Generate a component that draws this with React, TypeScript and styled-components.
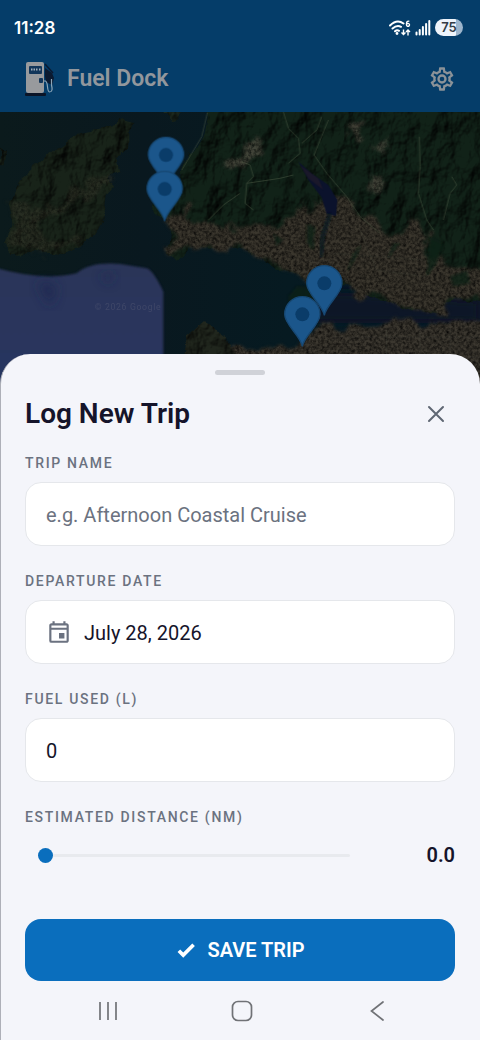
import React, { useState } from "react";
import styled, { createGlobalStyle } from "styled-components";
import { MdOutlineEvent } from "react-icons/md";

const GlobalStyle = createGlobalStyle`
  *, *::before, *::after { box-sizing: border-box; }
  body { margin: 0; background: #f4f5fa; }
  button, input { font-family: inherit; }
`;

const Screen = styled.div`
  min-height: 100vh;
  display: flex;
  flex-direction: column;
  background: #f4f5fa;
  color: #15142a;
  font-family: Roboto, "Liberation Sans", sans-serif;
`;

const Top = styled.header`
  background: #053d69;
  height: 112px;
`;

const StatusBar = styled.div`
  height: 55px;
  padding: 0 17px 0 14px;
  display: flex;
  align-items: center;
  justify-content: space-between;
  color: #fff;
`;

const Clock = styled.time`
  font: 600 17px/20px Inter, sans-serif;
`;

const StatusIcons = styled.div`
  display: flex;
  align-items: center;
  gap: 4px;
`;

const Battery = styled.span`
  width: 28px;
  height: 17px;
  border-radius: 9px;
  background: linear-gradient(90deg, #eef4fb 75%, #9db5cc 75%);
  color: #333b45;
  font: 600 13px/17px Inter, sans-serif;
  text-align: center;
`;

const AppBar = styled.div`
  height: 48px;
  padding: 0 24px 0 25px;
  display: flex;
  align-items: center;
  gap: 12px;
`;

const Brand = styled.h1`
  flex: 1;
  margin: 0;
  color: #92979d;
  font-size: 23px;
  line-height: 28px;
  font-weight: 600;
`;

const IconButton = styled.button<{ $color: string }>`
  display: grid;
  place-items: center;
  padding: 0;
  border: 0;
  background: none;
  color: ${(p) => p.$color};
  cursor: pointer;
`;

const MapView = styled.div`
  height: 276px;
  background: #08191e;
  svg { display: block; width: 100%; height: 100%; }
`;

const Sheet = styled.main`
  position: relative;
  margin-top: -34px;
  padding: 16px 25px 0 24px;
  border-left: 1px solid #aeb0b8;
  border-radius: 30px 30px 0 0;
  background: #f4f5fa;
`;

const Handle = styled.div`
  width: 50px;
  height: 5px;
  margin: 0 auto 21px;
  border-radius: 3px;
  background: #d0d2d8;
`;

const SheetHead = styled.div`
  display: flex;
  align-items: center;
  justify-content: space-between;
  height: 36px;
  margin-bottom: 22px;
  padding-right: 8px;
`;

const Title = styled.h2`
  margin: 0;
  font-size: 28px;
  line-height: 36px;
  font-weight: 600;
`;

const Field = styled.div`
  margin-bottom: 26px;
`;

const Label = styled.label`
  display: block;
  margin-bottom: 10px;
  color: #6b7280;
  font-size: 14px;
  line-height: 18px;
  font-weight: 500;
  letter-spacing: 0.12em;
`;

const InputBox = styled.div`
  display: flex;
  align-items: center;
  gap: 12px;
  height: 64px;
  padding: 0 20px;
  border: 1px solid #e5e7eb;
  border-radius: 16px;
  background: #fff;
  color: #6b7280;
`;

const TextInput = styled.input`
  flex: 1;
  min-width: 0;
  padding: 2px 0 0;
  border: 0;
  outline: 0;
  background: none;
  color: #15142a;
  font-size: 20px;
  line-height: 28px;
  &::placeholder { color: #6b7280; opacity: 1; }
`;

const SliderRow = styled.div`
  display: flex;
  align-items: center;
  height: 38px;
  margin-bottom: 45px;
  padding-left: 13px;
`;

const Slider = styled.input`
  flex: 1;
  min-width: 0;
  height: 15px;
  margin: 0;
  appearance: none;
  background: none;
  &::-webkit-slider-runnable-track { height: 3px; border-radius: 2px; background: #e8eaee; }
  &::-webkit-slider-thumb {
    appearance: none;
    width: 15px;
    height: 15px;
    margin-top: -6px;
    border-radius: 50%;
    background: #0a6ebd;
  }
`;

const Distance = styled.output`
  width: 105px;
  text-align: right;
  font-size: 20px;
  line-height: 28px;
  font-weight: 600;
`;

const SaveButton = styled.button`
  display: flex;
  align-items: center;
  justify-content: center;
  gap: 10px;
  width: 100%;
  height: 62px;
  border: 0;
  border-radius: 16px;
  background: #0a6ebd;
  color: #fff;
  font-size: 20px;
  line-height: 28px;
  font-weight: 600;
  cursor: pointer;
`;

const SystemNav = styled.nav`
  flex: 1;
  min-height: 58px;
  display: grid;
  grid-template-columns: repeat(3, 1fr);
  padding: 0 36px 0 40px;
  border-left: 1px solid #aeb0b8;
`;

function PumpLogo() {
  return (
    <svg width="30" height="36" viewBox="0 0 30 36" aria-hidden="true">
      <path d="M20 7l7 5 2 5-2 7-6-3-1-6z" fill="#0b1a30" />
      <path d="M20 3l8 9" stroke="#0b1a30" strokeWidth="1.5" />
      <rect x="1" y="1" width="18" height="31" rx="2" fill="#989a9d" />
      <rect x="4" y="5" width="13" height="8" rx="1" fill="#12365a" />
      <path d="M6 8.500h7M14 8.500h2" stroke="#a3b0ba" strokeWidth="2" strokeDasharray="1.5 1" />
      <rect x="14" y="17" width="4" height="5" rx="1" fill="#12365a" />
      <path d="M19 20h1.500c3 1 1 11 4 11s3-3 2-7v-6" fill="none" stroke="#8da6b7" strokeWidth="1.200" />
      <rect x="0" y="32" width="21" height="3" rx="1" fill="#0a1427" />
    </svg>
  );
}

function WifiIcon() {
  return (
    <svg width="22" height="18" viewBox="0 0 22 18" fill="none" stroke="#fff" aria-hidden="true">
      <path d="M1 6.500Q8-.5 14.500 4.500M3.500 9.500Q8 5.500 12 7.800M6 12.300Q8 10.500 10 11.800" strokeWidth="2" strokeLinecap="round" />
      <circle cx="8" cy="14.500" r="1.400" fill="#fff" stroke="none" />
      <path d="M20.300 2.300Q17.500 1.500 17.500 5v1a1.500 1.500 0 1 0 .2-.9" strokeWidth="1.400" />
      <path d="M14.500 10.500v5M12.500 13.500l2 2 2-2M19 16.500v-5.500M17 13l2-2 2 2" strokeWidth="1.400" />
    </svg>
  );
}

function SignalIcon() {
  return (
    <svg width="16" height="17" viewBox="0 0 16 17" stroke="#fff" strokeWidth="2" strokeLinecap="round" aria-hidden="true">
      <path d="M1.500 13.500v2M4.700 11v4.500M7.900 8v7.500M11.100 5v10.500M14.300 2v13.500" />
    </svg>
  );
}

const COG =
  "M12,8A4,4 0 0,1 16,12A4,4 0 0,1 12,16A4,4 0 0,1 8,12A4,4 0 0,1 12,8M12,10A2,2 0 0,0 10,12A2,2 0 0,0 12,14A2,2 0 0,0 14,12A2,2 0 0,0 12,10M10,22C9.75,22 9.54,21.82 9.5,21.58L9.13,18.93C8.5,18.68 7.96,18.34 7.44,17.94L4.95,18.95C4.73,19.03 4.46,18.95 4.34,18.73L2.34,15.27C2.21,15.05 2.27,14.78 2.46,14.63L4.57,12.97L4.5,12L4.57,11L2.46,9.37C2.27,9.22 2.21,8.95 2.34,8.73L4.34,5.27C4.46,5.05 4.73,4.96 4.95,5.05L7.44,6.05C7.96,5.66 8.5,5.32 9.13,5.07L9.5,2.42C9.54,2.18 9.75,2 10,2H14C14.25,2 14.46,2.18 14.5,2.42L14.87,5.07C15.5,5.32 16.04,5.66 16.56,6.05L19.05,5.05C19.27,4.96 19.54,5.05 19.66,5.27L21.66,8.73C21.79,8.95 21.73,9.22 21.54,9.37L19.43,11L19.5,12L19.43,13L21.54,14.63C21.73,14.78 21.79,15.05 21.66,15.27L19.66,18.73C19.54,18.95 19.27,19.04 19.05,18.95L16.56,17.95C16.04,18.34 15.5,18.68 14.87,18.93L14.5,21.58C14.46,21.82 14.25,22 14,22H10M11.25,4L10.88,6.61C9.68,6.86 8.62,7.5 7.85,8.39L5.44,7.35L4.69,8.65L6.8,10.2C6.4,11.37 6.4,12.64 6.8,13.8L4.68,15.36L5.43,16.66L7.86,15.62C8.63,16.5 9.68,17.14 10.87,17.38L11.24,20H12.76L13.13,17.39C14.32,17.14 15.37,16.5 16.14,15.62L18.57,16.66L19.32,15.36L17.2,13.81C17.6,12.64 17.6,11.37 17.2,10.2L19.31,8.65L18.56,7.35L16.15,8.39C15.38,7.5 14.32,6.86 13.12,6.62L12.75,4H11.25Z";

const PINS = [
  { x: 498, y: 135 },
  { x: 494, y: 237 },
  { x: 973, y: 520 },
  { x: 907, y: 613 },
];

const ISLAND =
  "M20 285L60 210L130 150L170 110L230 72L350 50L365 30L415 40L385 70L385 110L350 140L358 185L320 210L345 235L320 260L310 330L290 370L240 415L180 432L100 425L40 430L12 400L35 350Z";
const MAINLAND =
  "M625 0L612 70L572 140L545 190L540 230L470 260L458 300L490 330L512 370L508 430L530 452L552 430L570 405L640 412L720 410L780 435L840 475L890 490L920 520L1045 532L1100 560L1180 570L1220 600L1320 610L1360 560L1440 575L1480 580V-30H625Z";
const NORTH_SHORE =
  "M500 310L560 300L620 345L720 350L840 345L900 295L950 290L1010 255L1060 280L1100 330L1160 375L1200 370L1225 340L1260 330L1290 380L1280 440L1330 455L1370 470L1480 480V580L1360 560L1320 610L1220 600L1180 570L1100 560L1045 532L920 520L890 490L840 475L780 435L720 410L640 412L570 405L530 452L508 430L512 370Z";
const DOWNTOWN =
  "M700 850V716L720 714L760 728L830 708L880 712L925 685L960 645L990 640L1020 652L1050 640L1090 660L1120 655L1160 626L1210 625L1250 640L1320 635L1370 620L1480 645V850Z";
const ISLAND_TOWNS =
  "M30 280L80 285L110 305L150 290L210 250L270 215L330 190L310 240L240 270L170 310L120 330L140 390L240 395L180 428L60 422L20 400L50 350Z";

function SatelliteMap() {
  return (
    <svg viewBox="0 6 1440 828" preserveAspectRatio="xMidYMin slice" role="img" aria-label="Satellite map with fuel docks">
      <defs>
        <filter id="relief" filterUnits="userSpaceOnUse" x="-60" y="-60" width="1560" height="920" colorInterpolationFilters="sRGB">
          <feTurbulence type="fractalNoise" baseFrequency="0.014 0.010" numOctaves="5" seed="11" result="n" />
          <feDiffuseLighting in="n" surfaceScale="22" diffuseConstant="1.150" lightingColor="#fff" result="l">
            <feDistantLight azimuth="225" elevation="50" />
          </feDiffuseLighting>
          <feDisplacementMap in="SourceGraphic" in2="n" scale="40" xChannelSelector="R" yChannelSelector="G" result="d" />
          <feGaussianBlur in="d" stdDeviation="2" result="s" />
          <feComposite in="l" in2="s" operator="arithmetic" k1="1" k2="0" k3="0" k4="0" />
        </filter>
        <filter id="urban" filterUnits="userSpaceOnUse" x="-60" y="-60" width="1560" height="920" colorInterpolationFilters="sRGB">
          <feTurbulence type="fractalNoise" baseFrequency="0.020" numOctaves="4" seed="5" result="n" />
          <feTurbulence type="fractalNoise" baseFrequency="0.110" numOctaves="3" seed="8" result="fine" />
          <feColorMatrix in="fine" values="1.100 .7 0 0 -.15  1.100 .7 0 0 -.15  1.100 .7 0 0 -.15  0 0 0 0 1" result="g" />
          <feDisplacementMap in="SourceGraphic" in2="n" scale="70" xChannelSelector="R" yChannelSelector="G" result="d" />
          <feGaussianBlur in="d" stdDeviation="4" result="s" />
          <feComposite in="g" in2="s" operator="arithmetic" k1="1" k2="0" k3="0" k4="0" />
        </filter>
        <filter id="soft"><feGaussianBlur stdDeviation="16" /></filter>
        <filter id="edge"><feGaussianBlur stdDeviation="3" /></filter>
        <linearGradient id="sea" x2="1">
          <stop offset="0" stopColor="#0b1a1c" />
          <stop offset=".3" stopColor="#09181f" />
          <stop offset=".6" stopColor="#061a21" />
          <stop offset="1" stopColor="#071526" />
        </linearGradient>
        <linearGradient id="deep" y2="1" x2="0">
          <stop offset="0" stopColor="#2c3459" />
          <stop offset="1" stopColor="#273460" />
        </linearGradient>
      </defs>
      <rect y="0" width="1440" height="840" fill="url(#sea)" />
      <path d="M920 540L1440 570V640H940Z" fill="#071225" filter="url(#soft)" />
      <g filter="url(#relief)">
        <path d={ISLAND} fill="#182319" />
        <path d="M0 110L20 120L14 160H0ZM490 6H545L520 40Z" fill="#1d2a1f" />
        <path d={MAINLAND} fill="#112218" />
        <path d="M540 760L560 680L600 645L660 665L725 716V850H540Z" fill="#20261d" />
      </g>
      <g filter="url(#urban)">
        <path d={NORTH_SHORE} fill="#3a362d" />
        <path d={DOWNTOWN} fill="#3b372f" />
        <path d={ISLAND_TOWNS} fill="#35362a" opacity=".55" />
        <path d="M1040 40L1075 20L1085 80L1060 100ZM1110 105L1165 85L1160 120ZM1110 200L1145 190L1130 260L1110 250ZM680 160L720 130L760 80L780 120L745 160L700 190Z" fill="#5a564a" opacity=".65" />
      </g>
      <g fill="#0d2016" filter="url(#edge)" opacity=".75">
        <path d="M865 560L890 530L940 530L950 600L900 640L870 610Z" />
        <path d="M1085 400L1070 440L1040 490L1060 430ZM1180 400L1200 400L1160 450ZM1350 500L1400 480L1410 520L1360 530ZM820 370L850 390L830 410Z" />
        <path d="M1290 380L1330 400L1310 460L1280 500ZM920 340L945 350L940 420L920 400Z" />
      </g>
      <path d="M895 155L935 190L985 225L1012 270L1008 318L980 312L965 262L925 210Z" fill="#0b122c" />
      <path d="M900 165L955 205L970 240L925 205Z" fill="#1a182a" />
      <path d="M990 310L968 380L962 440" fill="none" stroke="#081a20" strokeWidth="11" filter="url(#edge)" />
      <g fill="none" stroke="#59664f" strokeWidth="3" opacity=".45">
        <path d="M850 6L865 55L895 85L900 130L865 160M965 20L950 60L905 100M985 30L960 90L942 135L980 190L1040 260L1080 320L1140 370" />
        <path d="M725 155L750 165L760 200L740 220L840 205L880 195M740 220L735 280L760 300M1258 80L1260 170L1255 250L1280 330L1300 360M1355 200L1370 225L1350 250L1330 330M625 330L670 285L720 250M622 8L605 80L575 130L545 180" />
      </g>
      <g fill="none" stroke="#4d5145" strokeWidth="2" opacity=".4">
        <path d="M1000 680H1440M1120 740H1440M1160 660V740M1260 650V740M1350 650V740M1000 430L1280 450M1080 360L1130 480L1280 500" />
      </g>
      <path d="M-20 472Q130 515 230 490Q270 455 360 462L440 475Q460 482 490 545V860H-20Z" fill="url(#deep)" filter="url(#edge)" />
      <g fill="#1f2850" filter="url(#soft)" opacity=".7">
        <path d="M110 520Q200 500 150 590ZM300 500Q360 470 330 520Z" />
      </g>
      <text x="284" y="601" fill="#3f4768" fontFamily="Roboto, sans-serif" fontSize="26" letterSpacing="2">© 2026 Google</text>
      {PINS.map((p) => (
        <g key={`${p.x}-${p.y}`} transform={`translate(${p.x} ${p.y})`}>
          <path d="M0 96C-7 62-53 32-53 0A53 53 0 1 1 53 0C53 32 7 62 0 96Z" fill="#1b568b" stroke="#174873" strokeWidth="4" />
          <circle r="21" fill="#0a3c69" />
        </g>
      ))}
    </svg>
  );
}

export default function App() {
  const [name, setName] = useState("");
  const [fuel, setFuel] = useState("0");
  const [distance, setDistance] = useState(0);

  return (
    <>
      <GlobalStyle />
      <Screen>
        <Top>
          <StatusBar>
            <Clock>11:28</Clock>
            <StatusIcons>
              <WifiIcon />
              <SignalIcon />
              <Battery>75</Battery>
            </StatusIcons>
          </StatusBar>
          <AppBar>
            <PumpLogo />
            <Brand>Fuel Dock</Brand>
            <IconButton type="button" aria-label="Settings" $color="#8b9298">
              <svg width="28" height="28" viewBox="0 0 24 24" fill="currentColor"><path d={COG} /></svg>
            </IconButton>
          </AppBar>
        </Top>
        <MapView><SatelliteMap /></MapView>
        <Sheet>
          <Handle />
          <SheetHead>
            <Title>Log New Trip</Title>
            <IconButton type="button" aria-label="Close" $color="#5f6773">
              <svg width="22" height="22" viewBox="0 0 22 22" fill="none" stroke="currentColor" strokeWidth="2" strokeLinecap="round">
                <path d="M4 4l14 14M18 4L4 18" />
              </svg>
            </IconButton>
          </SheetHead>
          <Field>
            <Label htmlFor="trip-name">TRIP NAME</Label>
            <InputBox>
              <TextInput id="trip-name" placeholder="e.g. Afternoon Coastal Cruise" value={name} onChange={(e) => setName(e.target.value)} />
            </InputBox>
          </Field>
          <Field>
            <Label htmlFor="departure">DEPARTURE DATE</Label>
            <InputBox>
              <MdOutlineEvent size={26} aria-hidden="true" />
              <TextInput id="departure" readOnly value="July 28, 2026" />
            </InputBox>
          </Field>
          <Field>
            <Label htmlFor="fuel">FUEL USED (L)</Label>
            <InputBox>
              <TextInput id="fuel" inputMode="decimal" value={fuel} onChange={(e) => setFuel(e.target.value)} />
            </InputBox>
          </Field>
          <Label htmlFor="distance">ESTIMATED DISTANCE (NM)</Label>
          <SliderRow>
            <Slider id="distance" type="range" min="0" max="100" step="0.1" value={distance} onChange={(e) => setDistance(Number(e.target.value))} />
            <Distance htmlFor="distance">{distance.toFixed(1)}</Distance>
          </SliderRow>
          <SaveButton type="button">
            <svg width="22" height="22" viewBox="0 0 24 24" fill="currentColor" aria-hidden="true">
              <path d="M9,20.42L2.79,14.21L5.62,11.38L9,14.77L18.88,4.88L21.71,7.71L9,20.42Z" />
            </svg>
            SAVE TRIP
          </SaveButton>
        </Sheet>
        <SystemNav aria-label="System">
          <IconButton type="button" aria-label="Recent apps" $color="#707276">
            <svg width="22" height="22" viewBox="0 0 22 22" stroke="currentColor" strokeWidth="1.700"><path d="M3 2v18M11 2v18M19 2v18" /></svg>
          </IconButton>
          <IconButton type="button" aria-label="Home" $color="#707276">
            <svg width="22" height="22" viewBox="0 0 22 22" fill="none" stroke="currentColor" strokeWidth="1.700"><rect x="1.500" y="1.500" width="19" height="19" rx="5.500" /></svg>
          </IconButton>
          <IconButton type="button" aria-label="Back" $color="#707276">
            <svg width="22" height="22" viewBox="0 0 22 22" fill="none" stroke="currentColor" strokeWidth="1.700" strokeLinecap="round"><path d="M17 2L5.500 11L17 20" /></svg>
          </IconButton>
        </SystemNav>
      </Screen>
    </>
  );
}
